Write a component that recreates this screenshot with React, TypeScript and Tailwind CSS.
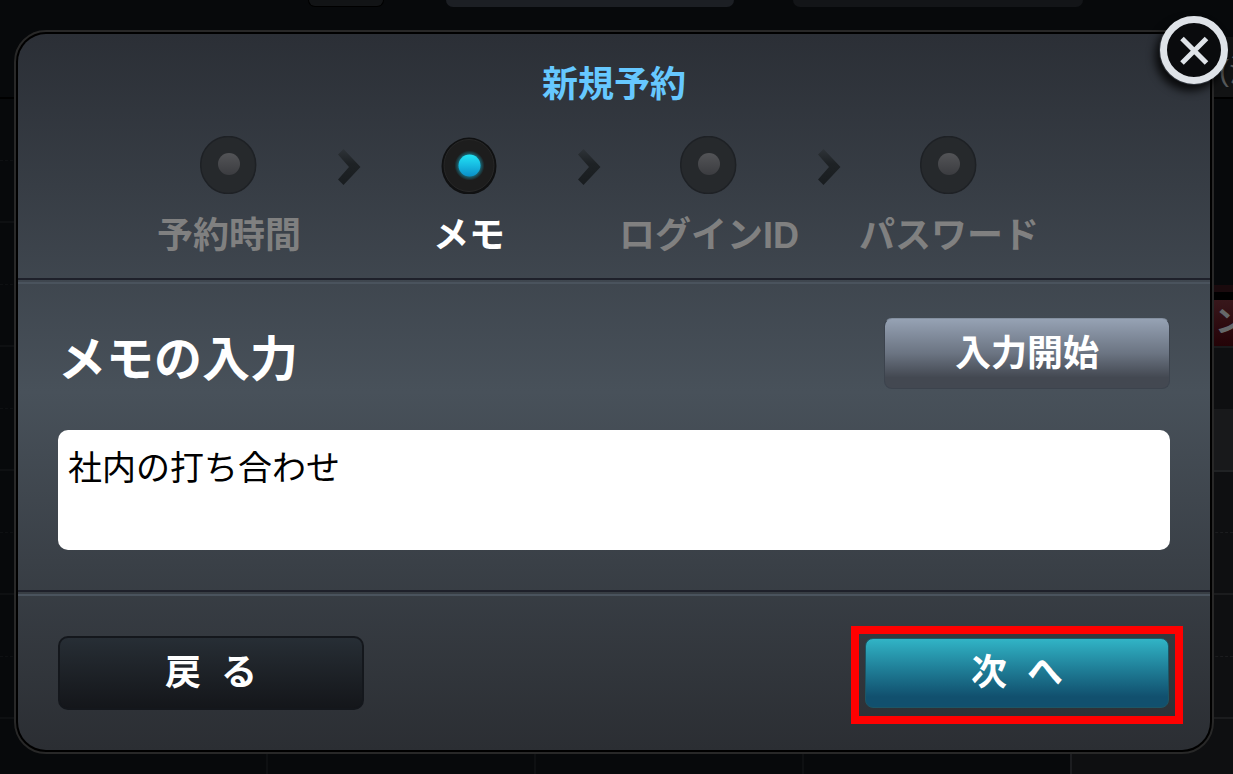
import { Fragment, useState } from 'react'

const steps = ['予約時間', 'メモ', 'ログインID', 'パスワード']

function StepDot({ active }: { active: boolean }) {
  return active ? (
    <svg viewBox="0 0 58 58" className="h-[58px] w-[58px]" aria-hidden="true">
      <defs>
        <linearGradient id="lamp" x1="0" y1="0" x2="0" y2="1">
          <stop offset="0" stopColor="#22e4f4" />
          <stop offset="0.45" stopColor="#18bfe4" />
          <stop offset="1" stopColor="#0a8fc8" />
        </linearGradient>
        <radialGradient id="glow">
          <stop offset="0.6" stopColor="#16a8c4" stopOpacity="0.75" />
          <stop offset="1" stopColor="#16a8c4" stopOpacity="0" />
        </radialGradient>
      </defs>
      <ellipse cx="29" cy="30" rx="27.5" ry="28.5" fill="#101112" />
      <ellipse cx="29" cy="29.5" rx="25" ry="26" fill="#1d1d1d" stroke="#272727" />
      <circle cx="29.5" cy="29.5" r="15" fill="url(#glow)" />
      <circle cx="29.5" cy="29.5" r="11" fill="url(#lamp)" />
    </svg>
  ) : (
    <svg viewBox="0 0 58 58" className="h-[58px] w-[58px]" aria-hidden="true">
      <defs>
        <linearGradient id="unlit" x1="0" y1="0" x2="0" y2="1">
          <stop offset="0" stopColor="#535457" />
          <stop offset="1" stopColor="#3b3c40" />
        </linearGradient>
      </defs>
      <ellipse cx="28.2" cy="29" rx="27.5" ry="28.5" fill="#26292c" stroke="#1e2125" strokeWidth="1.5" />
      <circle cx="29" cy="28" r="11" fill="url(#unlit)" />
    </svg>
  )
}

function StepArrow() {
  return (
    <svg viewBox="0 0 24 38" className="mt-3 h-[38px] w-6" aria-hidden="true">
      <defs>
        <linearGradient id="arrow" x1="0" y1="0" x2="0" y2="1">
          <stop offset="0" stopColor="#2e3338" />
          <stop offset="0.4" stopColor="#1e2225" />
          <stop offset="1" stopColor="#191d20" />
        </linearGradient>
      </defs>
      <path d="M6.5 1 23.5 19 6.5 37 1 31.5 12 19 1 6.5Z" fill="url(#arrow)" />
    </svg>
  )
}

function Divider() {
  return (
    <div>
      <div className="h-0.5 bg-[#1e202a]" />
      <div className="mt-0.5 h-0.5 bg-[#4a535d]" />
    </div>
  )
}

// Dimmed schedule page behind the dialog
function Schedule() {
  return (
    <div className="flex min-h-screen flex-col bg-[#07090b]" aria-hidden="true">
      <div className="flex h-[97px] flex-col justify-between">
        <div className="flex">
          <div className="ml-[308px] h-[7px] w-[76px] rounded-b-2xl border border-t-0 border-black bg-[#121416]" />
          <div className="ml-[62px] h-[7px] w-[288px] rounded-b-lg bg-[#1c1f24]" />
          <div className="ml-[59px] h-[7px] w-[290px] rounded-b-lg bg-[#131518]" />
        </div>
        <div className="flex h-[60px] w-5 items-center self-end overflow-hidden bg-[#121314] pt-2 pl-1.5 text-3xl whitespace-nowrap text-[#55585a]">
          (注
        </div>
      </div>
      <div className="h-0.5 bg-black" />
      <div className="flex grow">
        <div className="flex grow flex-col">
          {[0, 1, 2, 3, 4].map((i) => (
            <Fragment key={i}>
              <div className="h-[62px] border-b border-dashed border-[#0e1012]" />
              <div className="h-[62px] border-b-2 border-[#0e1012]" />
            </Fragment>
          ))}
          <div className="grid grow grid-cols-4">
            {[0, 1, 2, 3].map((i) => (
              <div key={i} className="border-r-2 border-[#0e1012] last:border-[#1c1d20]" />
            ))}
          </div>
        </div>
        <div className="flex w-[161px] flex-col bg-[#0e0f11]">
          <div className="h-[186px] bg-[#07090b]" />
          <div className="h-[7px] bg-[#1a0a0d]" />
          <div className="h-2 bg-black" />
          <div className="flex h-[46px] items-center justify-end overflow-hidden bg-linear-to-b from-[#38171b] to-[#240307] text-3xl font-bold text-[#65686a]">
            <span className="-mr-3 pb-1">ン</span>
          </div>
          <div className="h-[63px] border-t-2 border-[#191a1c]" />
          <div className="h-[63px] border-b-2 border-[#202224] bg-[#18191b]" />
          <div className="h-[61px] border-b border-dashed border-[#1b1c1e]" />
          <div className="h-[62px] border-b-2 border-[#1b1c1e]" />
          <div className="h-[62px] border-b border-dashed border-[#1b1c1e]" />
          <div className="h-[62px] border-b-2 border-[#1b1c1e]" />
        </div>
      </div>
    </div>
  )
}

export default function App() {
  const [memo, setMemo] = useState('社内の打ち合わせ')

  return (
    <div className="relative overflow-hidden font-['Liberation_Sans','Noto_Sans_CJK_JP',sans-serif]">
      <Schedule />

      <div
        role="dialog"
        aria-labelledby="dialog-title"
        className="absolute top-[30px] right-[19px] left-[14px] rounded-[32px] border-2 border-[#282828] bg-black p-0.5"
      >
        <button type="button" aria-label="閉じる" className="absolute -top-[17px] -right-[17px] rounded-full shadow-[-4px_6px_8px_rgba(0,0,0,0.8)]">
          <svg viewBox="0 0 70 70" className="h-[70px] w-[70px]" aria-hidden="true">
            <circle cx="35" cy="35" r="30.5" fill="#0a0b0d" stroke="#dfe3e8" strokeWidth="7" />
            <path d="M23 23.500 47.500 48M47.500 23.500 23 48" stroke="#dfe3e8" strokeWidth="5" />
          </svg>
        </button>

        <div className="rounded-[28px] bg-linear-to-b from-[#2b2f36] via-[#48515a] to-[#2b2e33]">
          <header className="pt-[23px] pb-3.5">
            <h1 id="dialog-title" className="text-center text-4xl leading-[56px] font-bold text-[#66c8ff]">
              新規予約
            </h1>
            <ol className="mt-[23px] grid grid-cols-7 pr-[201px] pl-[151px]">
              {steps.map((step, i) => (
                <Fragment key={step}>
                  {i > 0 && (
                    <li className="flex justify-center" aria-hidden="true">
                      <StepArrow />
                    </li>
                  )}
                  <li className="flex flex-col items-center" aria-current={i === 1 ? 'step' : undefined}>
                    <StepDot active={i === 1} />
                    <span
                      className={`mt-3.5 text-4xl leading-[56px] font-bold whitespace-nowrap ${i === 1 ? 'text-white' : 'text-[#808080]'}`}
                    >
                      {step}
                    </span>
                  </li>
                </Fragment>
              ))}
            </ol>
          </header>

          <Divider />

          <section className="px-10 pt-[34px] pb-10">
            <div className="flex items-start justify-between">
              <label htmlFor="memo" className="mt-1.5 text-5xl leading-[72px] font-bold text-white">
                メモの入力
              </label>
              <button
                type="button"
                className="h-[71px] w-[286px] rounded-lg border border-[#3c434d] border-t-[#8490a0] bg-linear-to-b from-[#96a2b4] via-[#6b7482] to-[#434851] to-85% text-4xl font-bold text-white"
              >
                入力開始
              </button>
            </div>
            <textarea
              id="memo"
              value={memo}
              onChange={(e) => setMemo(e.target.value)}
              className="mt-[34px] block h-[120px] w-full resize-none rounded-[10px] bg-white px-2.5 pt-3 text-[34px] leading-[52px] text-black outline-none"
            />
          </section>

          <Divider />

          <footer className="flex items-center justify-between px-10 pt-10 pb-10">
            <button
              type="button"
              className="h-[74px] w-[306px] rounded-[10px] border-2 border-[#14171c] bg-linear-to-b from-[#272e35] to-[#14161a] text-4xl font-bold whitespace-pre text-white"
            >
              戻  る
            </button>
            <div className="relative mr-px">
              <button
                type="button"
                className="block h-[70px] w-[304px] rounded-lg border border-[#1d5665] bg-linear-to-b from-[#31b4c6] to-[#11506e] to-85% text-4xl font-bold whitespace-pre text-white"
              >
                次  へ
              </button>
              <div className="pointer-events-none absolute -inset-x-3.5 -top-3 -bottom-4 border-8 border-[#ff0000]" />
            </div>
          </footer>
        </div>
      </div>
    </div>
  )
}
